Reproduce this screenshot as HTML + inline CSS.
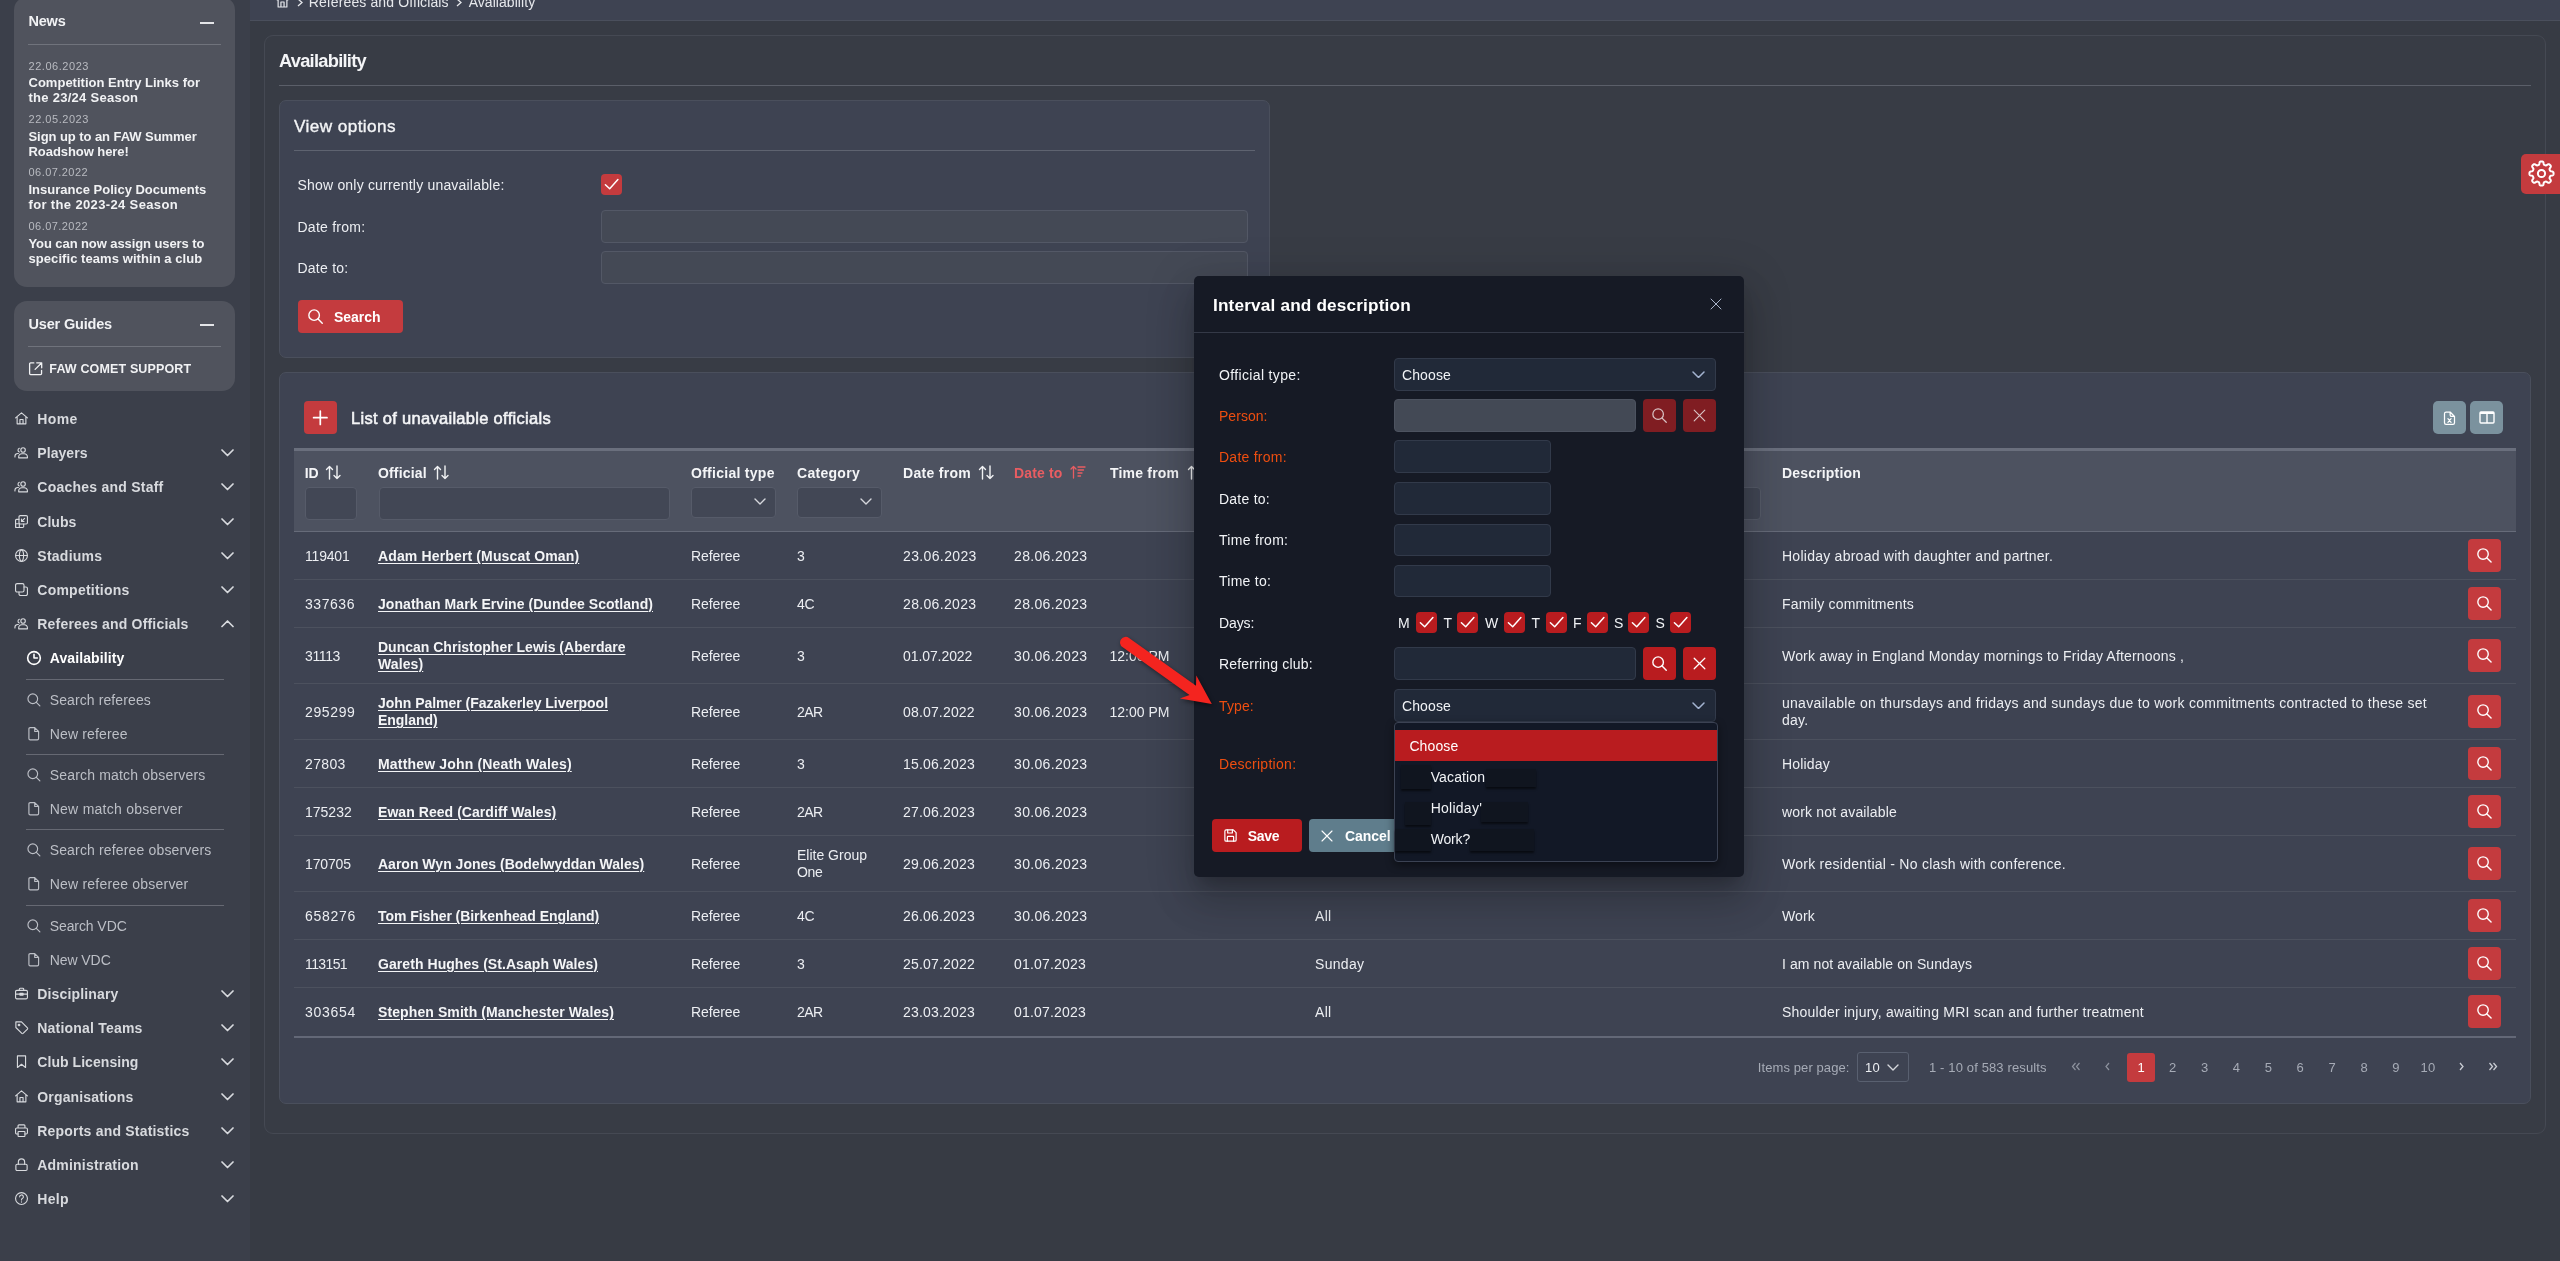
<!DOCTYPE html>
<html><head><meta charset="utf-8"><title>Availability</title>
<style>
html,body{margin:0;padding:0;}
body{width:2560px;height:1261px;overflow:hidden;position:relative;background:#373b44;font-family:"Liberation Sans",sans-serif;}
#w{position:absolute;left:0;top:0;width:2560px;height:1261px;overflow:hidden;will-change:transform;}
.a{position:absolute;box-sizing:border-box;}
.t{white-space:nowrap;}
.u{text-decoration:underline;text-underline-offset:2px;text-decoration-thickness:1px;}
</style></head><body>
<div id="w">
<div class="a" style="left:0px;top:0px;width:250px;height:1261px;background:#3b3f4a;"></div>
<div class="a" style="left:14px;top:-3px;width:221px;height:289.5px;background:#50535d;border-radius:13px;"></div>
<div class="a t " style="left:28.5px;top:13.73px;font-size:14.5px;line-height:14.5px;color:#f1f2f4;letter-spacing:-0.220px;font-weight:bold;">News</div>
<div class="a" style="left:200px;top:22px;width:14px;height:2px;background:#e4e5e8;"></div>
<div class="a" style="left:28px;top:44px;width:193px;height:1px;background:#70737c;"></div>
<div class="a t " style="left:28.5px;top:60.69px;font-size:11px;line-height:11px;color:#b9bbc1;letter-spacing:0.545px;">22.06.2023</div>
<div class="a t " style="left:28.5px;top:76.00px;font-size:13px;line-height:13px;color:#f1f2f4;letter-spacing:0.012px;font-weight:bold;">Competition Entry Links for</div>
<div class="a t " style="left:28.5px;top:91.00px;font-size:13px;line-height:13px;color:#f1f2f4;letter-spacing:0.269px;font-weight:bold;">the 23/24 Season</div>
<div class="a t " style="left:28.5px;top:113.69px;font-size:11px;line-height:11px;color:#b9bbc1;letter-spacing:0.525px;">22.05.2023</div>
<div class="a t " style="left:28.5px;top:130.00px;font-size:13px;line-height:13px;color:#f1f2f4;letter-spacing:-0.064px;font-weight:bold;">Sign up to an FAW Summer</div>
<div class="a t " style="left:28.5px;top:145.00px;font-size:13px;line-height:13px;color:#f1f2f4;letter-spacing:-0.059px;font-weight:bold;">Roadshow here!</div>
<div class="a t " style="left:28.5px;top:167.19px;font-size:11px;line-height:11px;color:#b9bbc1;letter-spacing:0.445px;">06.07.2022</div>
<div class="a t " style="left:28.5px;top:183.00px;font-size:13px;line-height:13px;color:#f1f2f4;letter-spacing:0.003px;font-weight:bold;">Insurance Policy Documents</div>
<div class="a t " style="left:28.5px;top:198.00px;font-size:13px;line-height:13px;color:#f1f2f4;letter-spacing:0.358px;font-weight:bold;">for the 2023-24 Season</div>
<div class="a t " style="left:28.5px;top:220.69px;font-size:11px;line-height:11px;color:#b9bbc1;letter-spacing:0.445px;">06.07.2022</div>
<div class="a t " style="left:28.5px;top:237.00px;font-size:13px;line-height:13px;color:#f1f2f4;letter-spacing:-0.088px;font-weight:bold;">You can now assign users to</div>
<div class="a t " style="left:28.5px;top:252.00px;font-size:13px;line-height:13px;color:#f1f2f4;letter-spacing:0.066px;font-weight:bold;">specific teams within a club</div>
<div class="a" style="left:14px;top:301px;width:221px;height:89.7px;background:#50535d;border-radius:13px;"></div>
<div class="a t " style="left:28.5px;top:316.73px;font-size:14.5px;line-height:14.5px;color:#f1f2f4;letter-spacing:-0.175px;font-weight:bold;">User Guides</div>
<div class="a" style="left:200px;top:324px;width:14px;height:2px;background:#e4e5e8;"></div>
<div class="a" style="left:28px;top:346px;width:193px;height:1px;background:#70737c;"></div>
<svg class="a" style="left:27.5px;top:360.5px;" width="15.5" height="15.5" viewBox="0 0 24 24"><path d="M9 3 H4 a1.5 1.5 0 0 0 -1.5 1.5 V19.5 a1.5 1.5 0 0 0 1.5 1.5 H19.5 a1.5 1.5 0 0 0 1.5 -1.5 V14.5 M13.5 2.8 H21.2 V10.5 M21 3 L11 13" stroke="#f1f2f4" stroke-width="2" fill="none" stroke-linecap="round" stroke-linejoin="round"/></svg>
<div class="a t " style="left:49.3px;top:363.02px;font-size:12.5px;line-height:12.5px;color:#f1f2f4;letter-spacing:0.142px;font-weight:bold;">FAW COMET SUPPORT</div>
<svg class="a" style="left:14px;top:411px;" width="15" height="15" viewBox="0 0 24 24"><g stroke="#d8dade" stroke-width="1.8" fill="none" stroke-linecap="round" stroke-linejoin="round"><path d="M2.5 11 L12 3 L21.5 11 M5 9.5 V20.5 H19 V9.5 M9.5 20.5 V13.5 H14.5 V20.5" /></g></svg>
<div class="a t " style="left:37.3px;top:412.15px;font-size:14px;line-height:14px;color:#d8dade;letter-spacing:0.351px;font-weight:bold;">Home</div>
<svg class="a" style="left:14px;top:445px;" width="15" height="15" viewBox="0 0 24 24"><g stroke="#d8dade" stroke-width="1.8" fill="none" stroke-linecap="round" stroke-linejoin="round"><circle cx="14.5" cy="8" r="3.6"/><path d="M7.5 20.5 v-1.5 a5 5 0 0 1 5 -5 h4 a5 5 0 0 1 5 5 v1.5 z M8.5 5.2 a3.2 3.2 0 0 0 0 6 M1.5 19 v-1 a4.5 4.5 0 0 1 4.5 -4.5 h1"/></g></svg>
<div class="a t " style="left:37.3px;top:446.15px;font-size:14px;line-height:14px;color:#d8dade;letter-spacing:0.068px;font-weight:bold;">Players</div>
<svg class="a" style="left:221.3px;top:449px;" width="13" height="7.5" viewBox="0 0 13 7.5"><path d="M1 1 L6.5 6.5 L12 1" stroke="#d8dade" stroke-width="1.7" fill="none" stroke-linecap="round" stroke-linejoin="round"/></svg>
<svg class="a" style="left:14px;top:479px;" width="15" height="15" viewBox="0 0 24 24"><g stroke="#d8dade" stroke-width="1.8" fill="none" stroke-linecap="round" stroke-linejoin="round"><circle cx="14.5" cy="8" r="3.6"/><path d="M7.5 20.5 v-1.5 a5 5 0 0 1 5 -5 h4 a5 5 0 0 1 5 5 v1.5 z M8.5 5.2 a3.2 3.2 0 0 0 0 6 M1.5 19 v-1 a4.5 4.5 0 0 1 4.5 -4.5 h1"/></g></svg>
<div class="a t " style="left:37.3px;top:480.15px;font-size:14px;line-height:14px;color:#d8dade;letter-spacing:0.239px;font-weight:bold;">Coaches and Staff</div>
<svg class="a" style="left:221.3px;top:483px;" width="13" height="7.5" viewBox="0 0 13 7.5"><path d="M1 1 L6.5 6.5 L12 1" stroke="#d8dade" stroke-width="1.7" fill="none" stroke-linecap="round" stroke-linejoin="round"/></svg>
<svg class="a" style="left:14px;top:514px;" width="15" height="15" viewBox="0 0 24 24"><g stroke="#d8dade" stroke-width="1.8" fill="none" stroke-linecap="round" stroke-linejoin="round"><rect x="8" y="2.5" width="13.5" height="13.5" rx="2"/><path d="M8 8.5 H4 a1.5 1.5 0 0 0 -1.5 1.5 V20 a1.5 1.5 0 0 0 1.5 1.5 H14 a1.5 1.5 0 0 0 1.5 -1.5 V16"/><path d="M17 7 L12 12 M12 8 V12 H16"/><rect x="2.5" y="15.5" width="6" height="6" rx="1"/></g></svg>
<div class="a t " style="left:37.3px;top:515.15px;font-size:14px;line-height:14px;color:#d8dade;letter-spacing:0.022px;font-weight:bold;">Clubs</div>
<svg class="a" style="left:221.3px;top:518px;" width="13" height="7.5" viewBox="0 0 13 7.5"><path d="M1 1 L6.5 6.5 L12 1" stroke="#d8dade" stroke-width="1.7" fill="none" stroke-linecap="round" stroke-linejoin="round"/></svg>
<svg class="a" style="left:14px;top:548px;" width="15" height="15" viewBox="0 0 24 24"><g stroke="#d8dade" stroke-width="1.8" fill="none" stroke-linecap="round" stroke-linejoin="round"><circle cx="12" cy="12" r="9.5"/><path d="M2.5 12 H21.5 M12 2.5 c-4.5 3 -4.5 16 0 19 M12 2.5 c4.5 3 4.5 16 0 19"/></g></svg>
<div class="a t " style="left:37.3px;top:549.15px;font-size:14px;line-height:14px;color:#d8dade;letter-spacing:0.248px;font-weight:bold;">Stadiums</div>
<svg class="a" style="left:221.3px;top:552px;" width="13" height="7.5" viewBox="0 0 13 7.5"><path d="M1 1 L6.5 6.5 L12 1" stroke="#d8dade" stroke-width="1.7" fill="none" stroke-linecap="round" stroke-linejoin="round"/></svg>
<svg class="a" style="left:14px;top:582px;" width="15" height="15" viewBox="0 0 24 24"><g stroke="#d8dade" stroke-width="1.8" fill="none" stroke-linecap="round" stroke-linejoin="round"><rect x="2.5" y="2.5" width="13.5" height="13.5" rx="2.5"/><path d="M16 8 H19 a2.5 2.5 0 0 1 2.5 2.5 V19 a2.5 2.5 0 0 1 -2.5 2.5 H10.5 a2.5 2.5 0 0 1 -2.5 -2.5 V16"/></g></svg>
<div class="a t " style="left:37.3px;top:583.15px;font-size:14px;line-height:14px;color:#d8dade;letter-spacing:0.230px;font-weight:bold;">Competitions</div>
<svg class="a" style="left:221.3px;top:586px;" width="13" height="7.5" viewBox="0 0 13 7.5"><path d="M1 1 L6.5 6.5 L12 1" stroke="#d8dade" stroke-width="1.7" fill="none" stroke-linecap="round" stroke-linejoin="round"/></svg>
<svg class="a" style="left:14px;top:616px;" width="15" height="15" viewBox="0 0 24 24"><g stroke="#d8dade" stroke-width="1.8" fill="none" stroke-linecap="round" stroke-linejoin="round"><circle cx="14.5" cy="8" r="3.6"/><path d="M7.5 20.5 v-1.5 a5 5 0 0 1 5 -5 h4 a5 5 0 0 1 5 5 v1.5 z M8.5 5.2 a3.2 3.2 0 0 0 0 6 M1.5 19 v-1 a4.5 4.5 0 0 1 4.5 -4.5 h1"/></g></svg>
<div class="a t " style="left:37.3px;top:617.15px;font-size:14px;line-height:14px;color:#d8dade;letter-spacing:0.188px;font-weight:bold;">Referees and Officials</div>
<svg class="a" style="left:221.3px;top:620px;" width="13" height="7.5" viewBox="0 0 13 7.5"><path d="M1 6.5 L6.5 1 L12 6.5" stroke="#d8dade" stroke-width="1.7" fill="none" stroke-linecap="round" stroke-linejoin="round"/></svg>
<svg class="a" style="left:14px;top:986px;" width="15" height="15" viewBox="0 0 24 24"><g stroke="#d8dade" stroke-width="1.8" fill="none" stroke-linecap="round" stroke-linejoin="round"><rect x="2.5" y="7" width="19" height="13.5" rx="2"/><path d="M8.5 7 V5 a1.5 1.5 0 0 1 1.5 -1.5 h4 a1.5 1.5 0 0 1 1.5 1.5 V7 M2.5 13 H21.5 M9.5 11.5 h5 v3 h-5 z"/></g></svg>
<div class="a t " style="left:37.3px;top:987.15px;font-size:14px;line-height:14px;color:#d8dade;letter-spacing:0.153px;font-weight:bold;">Disciplinary</div>
<svg class="a" style="left:221.3px;top:990px;" width="13" height="7.5" viewBox="0 0 13 7.5"><path d="M1 1 L6.5 6.5 L12 1" stroke="#d8dade" stroke-width="1.7" fill="none" stroke-linecap="round" stroke-linejoin="round"/></svg>
<svg class="a" style="left:14px;top:1020px;" width="15" height="15" viewBox="0 0 24 24"><g stroke="#d8dade" stroke-width="1.8" fill="none" stroke-linecap="round" stroke-linejoin="round"><path d="M3 3 H12 L21.5 12.5 a1.5 1.5 0 0 1 0 2 L14.5 21.5 a1.5 1.5 0 0 1 -2 0 L3 12 z"/><circle cx="8" cy="8" r="1.3"/></g></svg>
<div class="a t " style="left:37.3px;top:1021.15px;font-size:14px;line-height:14px;color:#d8dade;letter-spacing:0.205px;font-weight:bold;">National Teams</div>
<svg class="a" style="left:221.3px;top:1024px;" width="13" height="7.5" viewBox="0 0 13 7.5"><path d="M1 1 L6.5 6.5 L12 1" stroke="#d8dade" stroke-width="1.7" fill="none" stroke-linecap="round" stroke-linejoin="round"/></svg>
<svg class="a" style="left:14px;top:1054px;" width="15" height="15" viewBox="0 0 24 24"><g stroke="#d8dade" stroke-width="1.8" fill="none" stroke-linecap="round" stroke-linejoin="round"><path d="M5.5 3 H18.5 V21.5 L12 16.5 L5.5 21.5 z"/></g></svg>
<div class="a t " style="left:37.3px;top:1055.15px;font-size:14px;line-height:14px;color:#d8dade;letter-spacing:0.054px;font-weight:bold;">Club Licensing</div>
<svg class="a" style="left:221.3px;top:1058px;" width="13" height="7.5" viewBox="0 0 13 7.5"><path d="M1 1 L6.5 6.5 L12 1" stroke="#d8dade" stroke-width="1.7" fill="none" stroke-linecap="round" stroke-linejoin="round"/></svg>
<svg class="a" style="left:14px;top:1089px;" width="15" height="15" viewBox="0 0 24 24"><g stroke="#d8dade" stroke-width="1.8" fill="none" stroke-linecap="round" stroke-linejoin="round"><path d="M2.5 11 L12 3 L21.5 11 M5 9.5 V20.5 H19 V9.5 M9.5 20.5 V13.5 H14.5 V20.5" /></g></svg>
<div class="a t " style="left:37.3px;top:1090.15px;font-size:14px;line-height:14px;color:#d8dade;letter-spacing:0.151px;font-weight:bold;">Organisations</div>
<svg class="a" style="left:221.3px;top:1093px;" width="13" height="7.5" viewBox="0 0 13 7.5"><path d="M1 1 L6.5 6.5 L12 1" stroke="#d8dade" stroke-width="1.7" fill="none" stroke-linecap="round" stroke-linejoin="round"/></svg>
<svg class="a" style="left:14px;top:1123px;" width="15" height="15" viewBox="0 0 24 24"><g stroke="#d8dade" stroke-width="1.8" fill="none" stroke-linecap="round" stroke-linejoin="round"><path d="M6.5 8 V4.5 a1.5 1.5 0 0 1 1.5 -1.5 h8 a1.5 1.5 0 0 1 1.5 1.5 V8 M6.5 17.5 H4.5 a2 2 0 0 1 -2 -2 V10 a2 2 0 0 1 2 -2 H19.5 a2 2 0 0 1 2 2 V15.5 a2 2 0 0 1 -2 2 H17.5"/><rect x="6.5" y="13.5" width="11" height="8" rx="1"/></g></svg>
<div class="a t " style="left:37.3px;top:1124.15px;font-size:14px;line-height:14px;color:#d8dade;letter-spacing:0.199px;font-weight:bold;">Reports and Statistics</div>
<svg class="a" style="left:221.3px;top:1127px;" width="13" height="7.5" viewBox="0 0 13 7.5"><path d="M1 1 L6.5 6.5 L12 1" stroke="#d8dade" stroke-width="1.7" fill="none" stroke-linecap="round" stroke-linejoin="round"/></svg>
<svg class="a" style="left:14px;top:1157px;" width="15" height="15" viewBox="0 0 24 24"><g stroke="#d8dade" stroke-width="1.8" fill="none" stroke-linecap="round" stroke-linejoin="round"><rect x="3" y="11.5" width="18" height="10" rx="2"/><path d="M7 11.5 V8 a5 5 0 0 1 10 0 V11.5"/></g></svg>
<div class="a t " style="left:37.3px;top:1158.15px;font-size:14px;line-height:14px;color:#d8dade;letter-spacing:0.194px;font-weight:bold;">Administration</div>
<svg class="a" style="left:221.3px;top:1161px;" width="13" height="7.5" viewBox="0 0 13 7.5"><path d="M1 1 L6.5 6.5 L12 1" stroke="#d8dade" stroke-width="1.7" fill="none" stroke-linecap="round" stroke-linejoin="round"/></svg>
<svg class="a" style="left:14px;top:1191px;" width="15" height="15" viewBox="0 0 24 24"><g stroke="#d8dade" stroke-width="1.8" fill="none" stroke-linecap="round" stroke-linejoin="round"><circle cx="12" cy="12" r="9.5"/><path d="M9 9.3 a3 3 0 1 1 4.3 2.7 c-1 .5 -1.3 1.2 -1.3 2.2 M12 17.3 v.4"/></g></svg>
<div class="a t " style="left:37.3px;top:1192.15px;font-size:14px;line-height:14px;color:#d8dade;letter-spacing:0.340px;font-weight:bold;">Help</div>
<svg class="a" style="left:221.3px;top:1195px;" width="13" height="7.5" viewBox="0 0 13 7.5"><path d="M1 1 L6.5 6.5 L12 1" stroke="#d8dade" stroke-width="1.7" fill="none" stroke-linecap="round" stroke-linejoin="round"/></svg>
<svg class="a" style="left:26.2px;top:650px;" width="16" height="16" viewBox="0 0 24 24"><g stroke="#ffffff" stroke-width="2.4" fill="none" stroke-linecap="round" stroke-linejoin="round"><circle cx="12" cy="12" r="9.5"/><path d="M12 6.5 V12 H17"/></g></svg>
<div class="a t " style="left:49.7px;top:651.15px;font-size:14px;line-height:14px;color:#ffffff;letter-spacing:0.100px;font-weight:bold;">Availability</div>
<svg class="a" style="left:26.2px;top:692px;" width="15.5" height="15.5" viewBox="0 0 24 24"><g stroke="#bcbfc6" stroke-width="1.8" fill="none" stroke-linecap="round" stroke-linejoin="round"><circle cx="10.5" cy="10.5" r="7.5"/><path d="M16 16 L21.5 21.5"/></g></svg>
<div class="a t " style="left:49.7px;top:693.15px;font-size:14px;line-height:14px;color:#bcbfc6;letter-spacing:0.106px;">Search referees</div>
<svg class="a" style="left:26.2px;top:726px;" width="15.5" height="15.5" viewBox="0 0 24 24"><g stroke="#bcbfc6" stroke-width="1.8" fill="none" stroke-linecap="round" stroke-linejoin="round"><path d="M13.5 2.5 H6.5 a2 2 0 0 0 -2 2 V19.5 a2 2 0 0 0 2 2 H17.5 a2 2 0 0 0 2 -2 V8.5 z M13.5 2.5 V8.5 H19.5"/></g></svg>
<div class="a t " style="left:49.7px;top:727.15px;font-size:14px;line-height:14px;color:#bcbfc6;letter-spacing:0.159px;">New referee</div>
<svg class="a" style="left:26.2px;top:767px;" width="15.5" height="15.5" viewBox="0 0 24 24"><g stroke="#bcbfc6" stroke-width="1.8" fill="none" stroke-linecap="round" stroke-linejoin="round"><circle cx="10.5" cy="10.5" r="7.5"/><path d="M16 16 L21.5 21.5"/></g></svg>
<div class="a t " style="left:49.7px;top:768.15px;font-size:14px;line-height:14px;color:#bcbfc6;letter-spacing:0.185px;">Search match observers</div>
<svg class="a" style="left:26.2px;top:801px;" width="15.5" height="15.5" viewBox="0 0 24 24"><g stroke="#bcbfc6" stroke-width="1.8" fill="none" stroke-linecap="round" stroke-linejoin="round"><path d="M13.5 2.5 H6.5 a2 2 0 0 0 -2 2 V19.5 a2 2 0 0 0 2 2 H17.5 a2 2 0 0 0 2 -2 V8.5 z M13.5 2.5 V8.5 H19.5"/></g></svg>
<div class="a t " style="left:49.7px;top:802.15px;font-size:14px;line-height:14px;color:#bcbfc6;letter-spacing:0.262px;">New match observer</div>
<svg class="a" style="left:26.2px;top:842px;" width="15.5" height="15.5" viewBox="0 0 24 24"><g stroke="#bcbfc6" stroke-width="1.8" fill="none" stroke-linecap="round" stroke-linejoin="round"><circle cx="10.5" cy="10.5" r="7.5"/><path d="M16 16 L21.5 21.5"/></g></svg>
<div class="a t " style="left:49.7px;top:843.15px;font-size:14px;line-height:14px;color:#bcbfc6;letter-spacing:0.156px;">Search referee observers</div>
<svg class="a" style="left:26.2px;top:876px;" width="15.5" height="15.5" viewBox="0 0 24 24"><g stroke="#bcbfc6" stroke-width="1.8" fill="none" stroke-linecap="round" stroke-linejoin="round"><path d="M13.5 2.5 H6.5 a2 2 0 0 0 -2 2 V19.5 a2 2 0 0 0 2 2 H17.5 a2 2 0 0 0 2 -2 V8.5 z M13.5 2.5 V8.5 H19.5"/></g></svg>
<div class="a t " style="left:49.7px;top:877.15px;font-size:14px;line-height:14px;color:#bcbfc6;letter-spacing:0.209px;">New referee observer</div>
<svg class="a" style="left:26.2px;top:918px;" width="15.5" height="15.5" viewBox="0 0 24 24"><g stroke="#bcbfc6" stroke-width="1.8" fill="none" stroke-linecap="round" stroke-linejoin="round"><circle cx="10.5" cy="10.5" r="7.5"/><path d="M16 16 L21.5 21.5"/></g></svg>
<div class="a t " style="left:49.7px;top:919.15px;font-size:14px;line-height:14px;color:#bcbfc6;letter-spacing:-0.081px;">Search VDC</div>
<svg class="a" style="left:26.2px;top:952px;" width="15.5" height="15.5" viewBox="0 0 24 24"><g stroke="#bcbfc6" stroke-width="1.8" fill="none" stroke-linecap="round" stroke-linejoin="round"><path d="M13.5 2.5 H6.5 a2 2 0 0 0 -2 2 V19.5 a2 2 0 0 0 2 2 H17.5 a2 2 0 0 0 2 -2 V8.5 z M13.5 2.5 V8.5 H19.5"/></g></svg>
<div class="a t " style="left:49.7px;top:953.15px;font-size:14px;line-height:14px;color:#bcbfc6;letter-spacing:-0.065px;">New VDC</div>
<div class="a" style="left:26px;top:679px;width:198px;height:1px;background:#666973;"></div>
<div class="a" style="left:26px;top:754px;width:198px;height:1px;background:#666973;"></div>
<div class="a" style="left:26px;top:828.7px;width:198px;height:1px;background:#666973;"></div>
<div class="a" style="left:26px;top:904.6px;width:198px;height:1px;background:#666973;"></div>
<div class="a" style="left:250px;top:0px;width:2310px;height:20px;background:#3e4352;"></div>
<div class="a" style="left:250px;top:20px;width:2310px;height:1px;background:#4a4f5c;"></div>
<svg class="a" style="left:275px;top:-7.5px;" width="15" height="15.5" viewBox="0 0 24 24"><g stroke="#e6e8ec" stroke-width="1.9" fill="none" stroke-linejoin="round"><path d="M2.5 11 L12 3 L21.5 11 M5 9.5 V22 H19 V9.5 M9.5 22 V14 H14.5 V22"/></g></svg>
<div class="a t " style="left:308.7px;top:-5.35px;font-size:14px;line-height:14px;color:#e6e8ec;letter-spacing:0.115px;">Referees and Officials</div>
<div class="a t " style="left:468.7px;top:-5.35px;font-size:14px;line-height:14px;color:#e6e8ec;letter-spacing:0.051px;">Availability</div>
<svg class="a" style="left:296px;top:-2px;" width="8" height="9" viewBox="0 0 8 9"><path d="M2 1 L6 4.5 L2 8" stroke="#e6e8ec" stroke-width="1.3" fill="none"/></svg>
<svg class="a" style="left:455px;top:-2px;" width="8" height="9" viewBox="0 0 8 9"><path d="M2 1 L6 4.5 L2 8" stroke="#e6e8ec" stroke-width="1.3" fill="none"/></svg>
<div class="a" style="left:264px;top:35px;width:2282px;height:1098.5px;background:#383c45;border:1px solid #454953;border-radius:9px;"></div>
<div class="a t " style="left:279px;top:52.01px;font-size:18.3px;line-height:18.3px;color:#f4f5f7;letter-spacing:-0.745px;font-weight:bold;">Availability</div>
<div class="a" style="left:279px;top:85px;width:2252px;height:1px;background:#5b5f69;"></div>
<div class="a" style="left:279px;top:100px;width:991px;height:258px;background:#3e4352;border:1px solid #4a4f5c;border-radius:7px;"></div>
<div class="a t " style="left:294px;top:117.74px;font-size:17.2px;line-height:17.2px;color:#f4f5f7;letter-spacing:0.399px;-webkit-text-stroke:0.35px #f4f5f7;">View options</div>
<div class="a" style="left:294px;top:150px;width:961px;height:1px;background:#5e6370;"></div>
<div class="a t " style="left:297.5px;top:178.15px;font-size:14px;line-height:14px;color:#eceef2;letter-spacing:0.194px;">Show only currently unavailable:</div>
<div class="a t " style="left:297.5px;top:220.15px;font-size:14px;line-height:14px;color:#eceef2;letter-spacing:0.245px;">Date from:</div>
<div class="a t " style="left:297.5px;top:260.65px;font-size:14px;line-height:14px;color:#eceef2;letter-spacing:0.234px;">Date to:</div>
<div class="a" style="left:601px;top:174px;width:21px;height:21px;background:#c43b3e;border-radius:4px;"></div>
<svg class="a" style="left:601px;top:174px;" width="21" height="21" viewBox="0 0 21 21"><path d="M4.4 10.8 L8.7 14.8 L16.9 5.6" stroke="#fff" stroke-width="1.5" fill="none" stroke-linecap="round" stroke-linejoin="round"/></svg>
<div class="a" style="left:601px;top:210px;width:647px;height:32.5px;background:#444955;border:1px solid #535866;border-radius:4px;"></div>
<div class="a" style="left:601px;top:251px;width:647px;height:32.5px;background:#444955;border:1px solid #535866;border-radius:4px;"></div>
<div class="a" style="left:298px;top:300px;width:105px;height:33px;background:#c43b3e;border-radius:4px;"></div>
<svg class="a" style="left:306.3px;top:306.6px;" width="18.6" height="18.6" viewBox="0 0 24 24"><circle cx="10.5" cy="10.5" r="6.8" fill="none" stroke="#fff" stroke-width="1.8"/><path d="M15.6 15.6 L21 21" stroke="#fff" stroke-width="1.8" stroke-linecap="round"/></svg>
<div class="a t " style="left:334px;top:309.65px;font-size:14px;line-height:14px;color:#fff;letter-spacing:-0.033px;font-weight:bold;">Search</div>
<div class="a" style="left:279px;top:372px;width:2252px;height:732px;background:#3e4352;border:1px solid #4a4f5c;border-radius:7px;"></div>
<div class="a" style="left:304px;top:401px;width:33px;height:33px;background:#c43b3e;border-radius:4px;"></div>
<svg class="a" style="left:304px;top:401px;" width="33" height="33" viewBox="0 0 33 33"><path d="M16.3 10 V23.4 M9.6 16.7 H23" stroke="#fff" stroke-width="1.7" stroke-linecap="round"/></svg>
<div class="a t " style="left:351px;top:410.03px;font-size:16.5px;line-height:16.5px;color:#f4f5f7;letter-spacing:0.297px;-webkit-text-stroke:0.55px #f4f5f7;">List of unavailable officials</div>
<div class="a" style="left:2433px;top:401px;width:33px;height:33px;background:#7b929e;border-radius:5px;"></div>
<div class="a" style="left:2470px;top:401px;width:33px;height:33px;background:#7b929e;border-radius:5px;"></div>
<svg class="a" style="left:2441.8px;top:409.5px;" width="15" height="16" viewBox="0 0 24 24"><g stroke="#fff" stroke-width="2" fill="none" stroke-linejoin="round" stroke-linecap="round"><path d="M13 2.5 H6.5 a2.5 2.5 0 0 0 -2.5 2.5 V19.5 a2.5 2.5 0 0 0 2.5 2.5 H17.5 a2.5 2.5 0 0 0 2.5 -2.5 V9.5 z M13 2.5 V7 a2.5 2.5 0 0 0 2.5 2.5 H20"/><path d="M9.5 13 L14.5 19 M14.5 13 L9.5 19"/></g></svg>
<svg class="a" style="left:2478.5px;top:411px;" width="16" height="13" viewBox="0 0 16 13"><g stroke="#fff" stroke-width="1.4" fill="none"><rect x="1" y="1" width="14" height="11" rx="1"/><path d="M8 1 V12"/><path d="M1 2 H15" stroke-width="2"/></g></svg>
<div class="a" style="left:294px;top:448px;width:2222px;height:3px;background:#6a6f7d;"></div>
<div class="a" style="left:294px;top:451px;width:2222px;height:80px;background:#4d5260;"></div>
<div class="a" style="left:294px;top:531px;width:2222px;height:1px;background:#666b79;"></div>
<div class="a t " style="left:304.8px;top:466.45px;font-size:14px;line-height:14px;color:#f4f5f7;letter-spacing:-0.125px;font-weight:bold;">ID</div>
<svg class="a" style="left:325px;top:464.5px;" width="16" height="15" viewBox="0 0 16 15"><g stroke="#f1f2f4" stroke-width="1.4" fill="none" stroke-linecap="round" stroke-linejoin="round"><path d="M4.5 14 V1.5 M1.5 4.5 L4.5 1.5 L7.5 4.5"/><path d="M12 1 V13.5 M9 10.5 L12 13.5 L15 10.5"/></g></svg>
<div class="a t " style="left:377.9px;top:466.45px;font-size:14px;line-height:14px;color:#f4f5f7;letter-spacing:0.193px;font-weight:bold;">Official</div>
<svg class="a" style="left:433.2px;top:464.5px;" width="16" height="15" viewBox="0 0 16 15"><g stroke="#f1f2f4" stroke-width="1.4" fill="none" stroke-linecap="round" stroke-linejoin="round"><path d="M4.5 14 V1.5 M1.5 4.5 L4.5 1.5 L7.5 4.5"/><path d="M12 1 V13.5 M9 10.5 L12 13.5 L15 10.5"/></g></svg>
<div class="a t " style="left:691px;top:466.45px;font-size:14px;line-height:14px;color:#f4f5f7;letter-spacing:0.278px;font-weight:bold;">Official type</div>
<div class="a t " style="left:797px;top:466.45px;font-size:14px;line-height:14px;color:#f4f5f7;letter-spacing:0.290px;font-weight:bold;">Category</div>
<div class="a t " style="left:903px;top:466.45px;font-size:14px;line-height:14px;color:#f4f5f7;letter-spacing:0.295px;font-weight:bold;">Date from</div>
<svg class="a" style="left:978.3px;top:464.5px;" width="16" height="15" viewBox="0 0 16 15"><g stroke="#f1f2f4" stroke-width="1.4" fill="none" stroke-linecap="round" stroke-linejoin="round"><path d="M4.5 14 V1.5 M1.5 4.5 L4.5 1.5 L7.5 4.5"/><path d="M12 1 V13.5 M9 10.5 L12 13.5 L15 10.5"/></g></svg>
<div class="a t " style="left:1014px;top:466.45px;font-size:14px;line-height:14px;color:#e85d62;letter-spacing:0.150px;font-weight:bold;">Date to</div>
<svg class="a" style="left:1070px;top:465px;" width="16" height="14" viewBox="0 0 16 14"><g stroke="#e85d62" stroke-width="1.3" fill="none" stroke-linecap="round" stroke-linejoin="round"><path d="M3.5 13 V1.5 M1 4 L3.5 1.5 L6 4"/><path d="M8 2 H15 M8 5 H13.5 M8 8 H12 M8 11 H10.5"/></g></svg>
<div class="a t " style="left:1110px;top:466.45px;font-size:14px;line-height:14px;color:#f4f5f7;letter-spacing:0.203px;font-weight:bold;">Time from</div>
<svg class="a" style="left:1186.5px;top:464.5px;" width="16" height="15" viewBox="0 0 16 15"><g stroke="#f1f2f4" stroke-width="1.4" fill="none" stroke-linecap="round" stroke-linejoin="round"><path d="M4.5 14 V1.5 M1.5 4.5 L4.5 1.5 L7.5 4.5"/><path d="M12 1 V13.5 M9 10.5 L12 13.5 L15 10.5"/></g></svg>
<div class="a t " style="left:1782px;top:466.45px;font-size:14px;line-height:14px;color:#f4f5f7;letter-spacing:0.171px;font-weight:bold;">Description</div>
<div class="a" style="left:305px;top:487px;width:51.5px;height:33px;background:#424755;border:1px solid #565b69;border-radius:4px;"></div>
<div class="a" style="left:378.5px;top:487px;width:291.3px;height:33px;background:#424755;border:1px solid #565b69;border-radius:4px;"></div>
<div class="a" style="left:691px;top:487px;width:84.5px;height:30.5px;background:#424755;border:1px solid #565b69;border-radius:4px;"></div>
<svg class="a" style="left:754px;top:497.5px;" width="12" height="7" viewBox="0 0 12 7"><path d="M1 1 L6.0 6 L11 1" stroke="#d5d7dc" stroke-width="1.4" fill="none" stroke-linecap="round" stroke-linejoin="round"/></svg>
<div class="a" style="left:797px;top:487px;width:85px;height:30.5px;background:#424755;border:1px solid #565b69;border-radius:4px;"></div>
<svg class="a" style="left:860px;top:497.5px;" width="12" height="7" viewBox="0 0 12 7"><path d="M1 1 L6.0 6 L11 1" stroke="#d5d7dc" stroke-width="1.4" fill="none" stroke-linecap="round" stroke-linejoin="round"/></svg>
<div class="a" style="left:1560px;top:487px;width:201px;height:33px;background:#424755;border:1px solid #565b69;border-radius:4px;"></div>
<div class="a" style="left:294px;top:579px;width:2222px;height:1px;background:#4c515e;"></div>
<div class="a t " style="left:305px;top:549.15px;font-size:14px;line-height:14px;color:#eceef2;letter-spacing:-0.196px;">119401</div>
<div class="a t u" style="left:378px;top:549.15px;font-size:14px;line-height:14px;color:#f4f5f7;letter-spacing:0.141px;font-weight:bold;">Adam Herbert (Muscat Oman)</div>
<div class="a t " style="left:691px;top:549.15px;font-size:14px;line-height:14px;color:#eceef2;letter-spacing:-0.080px;">Referee</div>
<div class="a t " style="left:797px;top:549.15px;font-size:14px;line-height:14px;color:#eceef2;letter-spacing:0.200px;">3</div>
<div class="a t " style="left:903px;top:549.15px;font-size:14px;line-height:14px;color:#eceef2;letter-spacing:0.368px;">23.06.2023</div>
<div class="a t " style="left:1014px;top:549.15px;font-size:14px;line-height:14px;color:#eceef2;letter-spacing:0.343px;">28.06.2023</div>
<div class="a t " style="left:1782px;top:549.15px;font-size:14px;line-height:14px;color:#eceef2;letter-spacing:0.253px;">Holiday abroad with daughter and partner.</div>
<div class="a" style="left:2467.7px;top:539px;width:33px;height:33px;background:#c43b3e;border-radius:4px;"></div>
<svg class="a" style="left:2474.8px;top:545.8px;" width="18.4" height="18.4" viewBox="0 0 24 24"><circle cx="10.5" cy="10.5" r="6.8" fill="none" stroke="#fff" stroke-width="1.8"/><path d="M15.6 15.6 L21 21" stroke="#fff" stroke-width="1.8" stroke-linecap="round"/></svg>
<div class="a" style="left:294px;top:627px;width:2222px;height:1px;background:#4c515e;"></div>
<div class="a t " style="left:305px;top:596.65px;font-size:14px;line-height:14px;color:#eceef2;letter-spacing:0.547px;">337636</div>
<div class="a t u" style="left:378px;top:596.65px;font-size:14px;line-height:14px;color:#f4f5f7;letter-spacing:0.051px;font-weight:bold;">Jonathan Mark Ervine (Dundee Scotland)</div>
<div class="a t " style="left:691px;top:596.65px;font-size:14px;line-height:14px;color:#eceef2;letter-spacing:-0.080px;">Referee</div>
<div class="a t " style="left:797px;top:596.65px;font-size:14px;line-height:14px;color:#eceef2;letter-spacing:-0.198px;">4C</div>
<div class="a t " style="left:903px;top:596.65px;font-size:14px;line-height:14px;color:#eceef2;letter-spacing:0.343px;">28.06.2023</div>
<div class="a t " style="left:1014px;top:596.65px;font-size:14px;line-height:14px;color:#eceef2;letter-spacing:0.343px;">28.06.2023</div>
<div class="a t " style="left:1782px;top:596.65px;font-size:14px;line-height:14px;color:#eceef2;letter-spacing:0.203px;">Family commitments</div>
<div class="a" style="left:2467.7px;top:587px;width:33px;height:33px;background:#c43b3e;border-radius:4px;"></div>
<svg class="a" style="left:2474.8px;top:593.8px;" width="18.4" height="18.4" viewBox="0 0 24 24"><circle cx="10.5" cy="10.5" r="6.8" fill="none" stroke="#fff" stroke-width="1.8"/><path d="M15.6 15.6 L21 21" stroke="#fff" stroke-width="1.8" stroke-linecap="round"/></svg>
<div class="a" style="left:294px;top:683px;width:2222px;height:1px;background:#4c515e;"></div>
<div class="a t " style="left:305px;top:648.65px;font-size:14px;line-height:14px;color:#eceef2;letter-spacing:-0.371px;">31113</div>
<div class="a t u" style="left:378px;top:640.15px;font-size:14px;line-height:14px;color:#f4f5f7;letter-spacing:0.004px;font-weight:bold;">Duncan Christopher Lewis (Aberdare</div>
<div class="a t u" style="left:378px;top:657.15px;font-size:14px;line-height:14px;color:#f4f5f7;letter-spacing:0.108px;font-weight:bold;">Wales)</div>
<div class="a t " style="left:691px;top:648.65px;font-size:14px;line-height:14px;color:#eceef2;letter-spacing:-0.080px;">Referee</div>
<div class="a t " style="left:797px;top:648.65px;font-size:14px;line-height:14px;color:#eceef2;letter-spacing:0.200px;">3</div>
<div class="a t " style="left:903px;top:648.65px;font-size:14px;line-height:14px;color:#eceef2;letter-spacing:-0.082px;">01.07.2022</div>
<div class="a t " style="left:1014px;top:648.65px;font-size:14px;line-height:14px;color:#eceef2;letter-spacing:0.343px;">30.06.2023</div>
<div class="a t " style="left:1109.5px;top:648.65px;font-size:14px;line-height:14px;color:#eceef2;letter-spacing:0.009px;">12:00 PM</div>
<div class="a t " style="left:1782px;top:648.65px;font-size:14px;line-height:14px;color:#eceef2;letter-spacing:0.185px;">Work away in England Monday mornings to Friday Afternoons ,</div>
<div class="a" style="left:2467.7px;top:639px;width:33px;height:33px;background:#c43b3e;border-radius:4px;"></div>
<svg class="a" style="left:2474.8px;top:645.8px;" width="18.4" height="18.4" viewBox="0 0 24 24"><circle cx="10.5" cy="10.5" r="6.8" fill="none" stroke="#fff" stroke-width="1.8"/><path d="M15.6 15.6 L21 21" stroke="#fff" stroke-width="1.8" stroke-linecap="round"/></svg>
<div class="a" style="left:294px;top:739px;width:2222px;height:1px;background:#4c515e;"></div>
<div class="a t " style="left:305px;top:704.65px;font-size:14px;line-height:14px;color:#eceef2;letter-spacing:0.630px;">295299</div>
<div class="a t u" style="left:378px;top:696.15px;font-size:14px;line-height:14px;color:#f4f5f7;letter-spacing:-0.033px;font-weight:bold;">John Palmer (Fazakerley Liverpool</div>
<div class="a t u" style="left:378px;top:713.15px;font-size:14px;line-height:14px;color:#f4f5f7;letter-spacing:-0.048px;font-weight:bold;">England)</div>
<div class="a t " style="left:691px;top:704.65px;font-size:14px;line-height:14px;color:#eceef2;letter-spacing:-0.080px;">Referee</div>
<div class="a t " style="left:797px;top:704.65px;font-size:14px;line-height:14px;color:#eceef2;letter-spacing:-0.578px;">2AR</div>
<div class="a t " style="left:903px;top:704.65px;font-size:14px;line-height:14px;color:#eceef2;letter-spacing:0.168px;">08.07.2022</div>
<div class="a t " style="left:1014px;top:704.65px;font-size:14px;line-height:14px;color:#eceef2;letter-spacing:0.343px;">30.06.2023</div>
<div class="a t " style="left:1109.5px;top:704.65px;font-size:14px;line-height:14px;color:#eceef2;letter-spacing:0.009px;">12:00 PM</div>
<div class="a t " style="left:1782px;top:696.15px;font-size:14px;line-height:14px;color:#eceef2;letter-spacing:0.266px;">unavailable on thursdays and fridays and sundays due to work commitments contracted to these set</div>
<div class="a t " style="left:1782px;top:713.15px;font-size:14px;line-height:14px;color:#eceef2;letter-spacing:0.200px;">day.</div>
<div class="a" style="left:2467.7px;top:695px;width:33px;height:33px;background:#c43b3e;border-radius:4px;"></div>
<svg class="a" style="left:2474.8px;top:701.8px;" width="18.4" height="18.4" viewBox="0 0 24 24"><circle cx="10.5" cy="10.5" r="6.8" fill="none" stroke="#fff" stroke-width="1.8"/><path d="M15.6 15.6 L21 21" stroke="#fff" stroke-width="1.8" stroke-linecap="round"/></svg>
<div class="a" style="left:294px;top:787px;width:2222px;height:1px;background:#4c515e;"></div>
<div class="a t " style="left:305px;top:756.65px;font-size:14px;line-height:14px;color:#eceef2;letter-spacing:0.364px;">27803</div>
<div class="a t u" style="left:378px;top:756.65px;font-size:14px;line-height:14px;color:#f4f5f7;letter-spacing:0.172px;font-weight:bold;">Matthew John (Neath Wales)</div>
<div class="a t " style="left:691px;top:756.65px;font-size:14px;line-height:14px;color:#eceef2;letter-spacing:-0.080px;">Referee</div>
<div class="a t " style="left:797px;top:756.65px;font-size:14px;line-height:14px;color:#eceef2;letter-spacing:0.200px;">3</div>
<div class="a t " style="left:903px;top:756.65px;font-size:14px;line-height:14px;color:#eceef2;letter-spacing:0.200px;">15.06.2023</div>
<div class="a t " style="left:1014px;top:756.65px;font-size:14px;line-height:14px;color:#eceef2;letter-spacing:0.343px;">30.06.2023</div>
<div class="a t " style="left:1782px;top:756.65px;font-size:14px;line-height:14px;color:#eceef2;letter-spacing:0.187px;">Holiday</div>
<div class="a" style="left:2467.7px;top:747px;width:33px;height:33px;background:#c43b3e;border-radius:4px;"></div>
<svg class="a" style="left:2474.8px;top:753.8px;" width="18.4" height="18.4" viewBox="0 0 24 24"><circle cx="10.5" cy="10.5" r="6.8" fill="none" stroke="#fff" stroke-width="1.8"/><path d="M15.6 15.6 L21 21" stroke="#fff" stroke-width="1.8" stroke-linecap="round"/></svg>
<div class="a" style="left:294px;top:835px;width:2222px;height:1px;background:#4c515e;"></div>
<div class="a t " style="left:305px;top:804.65px;font-size:14px;line-height:14px;color:#eceef2;letter-spacing:0.005px;">175232</div>
<div class="a t u" style="left:378px;top:804.65px;font-size:14px;line-height:14px;color:#f4f5f7;letter-spacing:0.056px;font-weight:bold;">Ewan Reed (Cardiff Wales)</div>
<div class="a t " style="left:691px;top:804.65px;font-size:14px;line-height:14px;color:#eceef2;letter-spacing:-0.080px;">Referee</div>
<div class="a t " style="left:797px;top:804.65px;font-size:14px;line-height:14px;color:#eceef2;letter-spacing:-0.578px;">2AR</div>
<div class="a t " style="left:903px;top:804.65px;font-size:14px;line-height:14px;color:#eceef2;letter-spacing:0.200px;">27.06.2023</div>
<div class="a t " style="left:1014px;top:804.65px;font-size:14px;line-height:14px;color:#eceef2;letter-spacing:0.343px;">30.06.2023</div>
<div class="a t " style="left:1782px;top:804.65px;font-size:14px;line-height:14px;color:#eceef2;letter-spacing:0.163px;">work not available</div>
<div class="a" style="left:2467.7px;top:795px;width:33px;height:33px;background:#c43b3e;border-radius:4px;"></div>
<svg class="a" style="left:2474.8px;top:801.8px;" width="18.4" height="18.4" viewBox="0 0 24 24"><circle cx="10.5" cy="10.5" r="6.8" fill="none" stroke="#fff" stroke-width="1.8"/><path d="M15.6 15.6 L21 21" stroke="#fff" stroke-width="1.8" stroke-linecap="round"/></svg>
<div class="a" style="left:294px;top:891px;width:2222px;height:1px;background:#4c515e;"></div>
<div class="a t " style="left:305px;top:856.65px;font-size:14px;line-height:14px;color:#eceef2;letter-spacing:-0.161px;">170705</div>
<div class="a t u" style="left:378px;top:856.65px;font-size:14px;line-height:14px;color:#f4f5f7;letter-spacing:0.006px;font-weight:bold;">Aaron Wyn Jones (Bodelwyddan Wales)</div>
<div class="a t " style="left:691px;top:856.65px;font-size:14px;line-height:14px;color:#eceef2;letter-spacing:-0.080px;">Referee</div>
<div class="a t " style="left:797px;top:848.15px;font-size:14px;line-height:14px;color:#eceef2;letter-spacing:-0.003px;">Elite Group</div>
<div class="a t " style="left:797px;top:865.15px;font-size:14px;line-height:14px;color:#eceef2;letter-spacing:-0.321px;">One</div>
<div class="a t " style="left:903px;top:856.65px;font-size:14px;line-height:14px;color:#eceef2;letter-spacing:0.200px;">29.06.2023</div>
<div class="a t " style="left:1014px;top:856.65px;font-size:14px;line-height:14px;color:#eceef2;letter-spacing:0.343px;">30.06.2023</div>
<div class="a t " style="left:1782px;top:856.65px;font-size:14px;line-height:14px;color:#eceef2;letter-spacing:0.253px;">Work residential - No clash with conference.</div>
<div class="a" style="left:2467.7px;top:847px;width:33px;height:33px;background:#c43b3e;border-radius:4px;"></div>
<svg class="a" style="left:2474.8px;top:853.8px;" width="18.4" height="18.4" viewBox="0 0 24 24"><circle cx="10.5" cy="10.5" r="6.8" fill="none" stroke="#fff" stroke-width="1.8"/><path d="M15.6 15.6 L21 21" stroke="#fff" stroke-width="1.8" stroke-linecap="round"/></svg>
<div class="a" style="left:294px;top:939px;width:2222px;height:1px;background:#4c515e;"></div>
<div class="a t " style="left:305px;top:908.65px;font-size:14px;line-height:14px;color:#eceef2;letter-spacing:0.714px;">658276</div>
<div class="a t u" style="left:378px;top:908.65px;font-size:14px;line-height:14px;color:#f4f5f7;letter-spacing:-0.064px;font-weight:bold;">Tom Fisher (Birkenhead England)</div>
<div class="a t " style="left:691px;top:908.65px;font-size:14px;line-height:14px;color:#eceef2;letter-spacing:-0.080px;">Referee</div>
<div class="a t " style="left:797px;top:908.65px;font-size:14px;line-height:14px;color:#eceef2;letter-spacing:-0.198px;">4C</div>
<div class="a t " style="left:903px;top:908.65px;font-size:14px;line-height:14px;color:#eceef2;letter-spacing:0.200px;">26.06.2023</div>
<div class="a t " style="left:1014px;top:908.65px;font-size:14px;line-height:14px;color:#eceef2;letter-spacing:0.343px;">30.06.2023</div>
<div class="a t " style="left:1315px;top:908.65px;font-size:14px;line-height:14px;color:#eceef2;letter-spacing:0.300px;">All</div>
<div class="a t " style="left:1782px;top:908.65px;font-size:14px;line-height:14px;color:#eceef2;letter-spacing:0.148px;">Work</div>
<div class="a" style="left:2467.7px;top:899px;width:33px;height:33px;background:#c43b3e;border-radius:4px;"></div>
<svg class="a" style="left:2474.8px;top:905.8px;" width="18.4" height="18.4" viewBox="0 0 24 24"><circle cx="10.5" cy="10.5" r="6.8" fill="none" stroke="#fff" stroke-width="1.8"/><path d="M15.6 15.6 L21 21" stroke="#fff" stroke-width="1.8" stroke-linecap="round"/></svg>
<div class="a" style="left:294px;top:987px;width:2222px;height:1px;background:#4c515e;"></div>
<div class="a t " style="left:305px;top:956.65px;font-size:14px;line-height:14px;color:#eceef2;letter-spacing:-0.613px;">113151</div>
<div class="a t u" style="left:378px;top:956.65px;font-size:14px;line-height:14px;color:#f4f5f7;letter-spacing:0.064px;font-weight:bold;">Gareth Hughes (St.Asaph Wales)</div>
<div class="a t " style="left:691px;top:956.65px;font-size:14px;line-height:14px;color:#eceef2;letter-spacing:-0.080px;">Referee</div>
<div class="a t " style="left:797px;top:956.65px;font-size:14px;line-height:14px;color:#eceef2;letter-spacing:0.200px;">3</div>
<div class="a t " style="left:903px;top:956.65px;font-size:14px;line-height:14px;color:#eceef2;letter-spacing:0.200px;">25.07.2022</div>
<div class="a t " style="left:1014px;top:956.65px;font-size:14px;line-height:14px;color:#eceef2;letter-spacing:0.200px;">01.07.2023</div>
<div class="a t " style="left:1315px;top:956.65px;font-size:14px;line-height:14px;color:#eceef2;letter-spacing:0.300px;">Sunday</div>
<div class="a t " style="left:1782px;top:956.65px;font-size:14px;line-height:14px;color:#eceef2;letter-spacing:0.084px;">I am not available on Sundays</div>
<div class="a" style="left:2467.7px;top:947px;width:33px;height:33px;background:#c43b3e;border-radius:4px;"></div>
<svg class="a" style="left:2474.8px;top:953.8px;" width="18.4" height="18.4" viewBox="0 0 24 24"><circle cx="10.5" cy="10.5" r="6.8" fill="none" stroke="#fff" stroke-width="1.8"/><path d="M15.6 15.6 L21 21" stroke="#fff" stroke-width="1.8" stroke-linecap="round"/></svg>
<div class="a t " style="left:305px;top:1005.15px;font-size:14px;line-height:14px;color:#eceef2;letter-spacing:0.714px;">303654</div>
<div class="a t u" style="left:378px;top:1005.15px;font-size:14px;line-height:14px;color:#f4f5f7;letter-spacing:0.098px;font-weight:bold;">Stephen Smith (Manchester Wales)</div>
<div class="a t " style="left:691px;top:1005.15px;font-size:14px;line-height:14px;color:#eceef2;letter-spacing:-0.080px;">Referee</div>
<div class="a t " style="left:797px;top:1005.15px;font-size:14px;line-height:14px;color:#eceef2;letter-spacing:-0.578px;">2AR</div>
<div class="a t " style="left:903px;top:1005.15px;font-size:14px;line-height:14px;color:#eceef2;letter-spacing:0.200px;">23.03.2023</div>
<div class="a t " style="left:1014px;top:1005.15px;font-size:14px;line-height:14px;color:#eceef2;letter-spacing:0.200px;">01.07.2023</div>
<div class="a t " style="left:1315px;top:1005.15px;font-size:14px;line-height:14px;color:#eceef2;letter-spacing:0.300px;">All</div>
<div class="a t " style="left:1782px;top:1005.15px;font-size:14px;line-height:14px;color:#eceef2;letter-spacing:0.226px;">Shoulder injury, awaiting MRI scan and further treatment</div>
<div class="a" style="left:2467.7px;top:995px;width:33px;height:33px;background:#c43b3e;border-radius:4px;"></div>
<svg class="a" style="left:2474.8px;top:1001.8px;" width="18.4" height="18.4" viewBox="0 0 24 24"><circle cx="10.5" cy="10.5" r="6.8" fill="none" stroke="#fff" stroke-width="1.8"/><path d="M15.6 15.6 L21 21" stroke="#fff" stroke-width="1.8" stroke-linecap="round"/></svg>
<div class="a" style="left:294px;top:1035.5px;width:2222px;height:2px;background:#636877;"></div>
<div class="a t " style="left:1757.8px;top:1061.00px;font-size:13px;line-height:13px;color:#a6abb6;letter-spacing:0.092px;">Items per page:</div>
<div class="a" style="left:1857px;top:1052.3px;width:51.5px;height:30px;background:#3e4352;border:1px solid #596070;border-radius:3px;"></div>
<div class="a t " style="left:1865px;top:1061.00px;font-size:13px;line-height:13px;color:#eceef2;letter-spacing:0.200px;">10</div>
<svg class="a" style="left:1887px;top:1063.5px;" width="12" height="7" viewBox="0 0 12 7"><path d="M1 1 L6.0 6 L11 1" stroke="#d5d7dc" stroke-width="1.4" fill="none" stroke-linecap="round" stroke-linejoin="round"/></svg>
<div class="a t " style="left:1929px;top:1061.00px;font-size:13px;line-height:13px;color:#a6abb6;letter-spacing:0.133px;">1 - 10 of 583 results</div>
<svg class="a" style="left:2071px;top:1062px;" width="10" height="9" viewBox="0 0 10 9"><path d="M4.5 1 L1.5 4.5 L4.5 8 M8.5 1 L5.5 4.5 L8.5 8" stroke="#8d929e" stroke-width="1.2" fill="none"/></svg>
<svg class="a" style="left:2104px;top:1062px;" width="8" height="9" viewBox="0 0 8 9"><path d="M5 1 L2 4.5 L5 8" stroke="#8d929e" stroke-width="1.2" fill="none"/></svg>
<div class="a" style="left:2127px;top:1053px;width:28px;height:28.5px;background:#c43b3e;border-radius:3px;"></div>
<div class="a t " style="left:2137.5px;top:1061.00px;font-size:13px;line-height:13px;color:#fff;letter-spacing:0.200px;">1</div>
<div class="a t " style="left:2168.984984375px;top:1061.00px;font-size:13px;line-height:13px;color:#a6abb6;letter-spacing:0.200px;">2</div>
<div class="a t " style="left:2200.884984375px;top:1061.00px;font-size:13px;line-height:13px;color:#a6abb6;letter-spacing:0.200px;">3</div>
<div class="a t " style="left:2232.784984375px;top:1061.00px;font-size:13px;line-height:13px;color:#a6abb6;letter-spacing:0.200px;">4</div>
<div class="a t " style="left:2264.6849843749997px;top:1061.00px;font-size:13px;line-height:13px;color:#a6abb6;letter-spacing:0.200px;">5</div>
<div class="a t " style="left:2296.5849843749997px;top:1061.00px;font-size:13px;line-height:13px;color:#a6abb6;letter-spacing:0.200px;">6</div>
<div class="a t " style="left:2328.484984375px;top:1061.00px;font-size:13px;line-height:13px;color:#a6abb6;letter-spacing:0.200px;">7</div>
<div class="a t " style="left:2360.384984375px;top:1061.00px;font-size:13px;line-height:13px;color:#a6abb6;letter-spacing:0.200px;">8</div>
<div class="a t " style="left:2392.284984375px;top:1061.00px;font-size:13px;line-height:13px;color:#a6abb6;letter-spacing:0.200px;">9</div>
<div class="a t " style="left:2420.4699687499997px;top:1061.00px;font-size:13px;line-height:13px;color:#a6abb6;letter-spacing:0.200px;">10</div>
<svg class="a" style="left:2457px;top:1062px;" width="8" height="9" viewBox="0 0 8 9"><path d="M3 1 L6 4.5 L3 8" stroke="#c9ccd3" stroke-width="1.3" fill="none"/></svg>
<svg class="a" style="left:2488px;top:1062px;" width="10" height="9" viewBox="0 0 10 9"><path d="M1.5 1 L4.5 4.5 L1.5 8 M5.5 1 L8.5 4.5 L5.5 8" stroke="#c9ccd3" stroke-width="1.3" fill="none"/></svg>
<div class="a" style="left:2521px;top:154px;width:45px;height:40px;background:#c43b3e;border-radius:5px;"></div>
<svg class="a" style="left:2527.9px;top:159.9px;" width="27" height="27" viewBox="0 0 27 27"><path d="M13.50 1.44 L13.82 1.45 L14.13 1.47 L14.44 1.52 L14.75 1.62 L15.04 1.81 L15.29 2.17 L15.49 2.78 L15.62 3.52 L15.75 4.13 L15.91 4.51 L16.10 4.72 L16.31 4.86 L16.52 4.96 L16.74 5.06 L16.96 5.15 L17.18 5.24 L17.40 5.33 L17.62 5.40 L17.87 5.45 L18.15 5.44 L18.53 5.29 L19.06 4.95 L19.67 4.52 L20.24 4.22 L20.68 4.15 L21.02 4.22 L21.30 4.36 L21.56 4.55 L21.80 4.75 L22.03 4.97 L22.25 5.20 L22.45 5.44 L22.64 5.70 L22.78 5.98 L22.85 6.32 L22.78 6.76 L22.48 7.33 L22.05 7.94 L21.71 8.47 L21.56 8.85 L21.55 9.13 L21.60 9.38 L21.67 9.60 L21.76 9.82 L21.85 10.04 L21.94 10.26 L22.04 10.48 L22.14 10.69 L22.28 10.90 L22.49 11.09 L22.87 11.25 L23.48 11.38 L24.22 11.51 L24.83 11.71 L25.19 11.96 L25.38 12.25 L25.48 12.56 L25.53 12.87 L25.55 13.18 L25.56 13.50 L25.55 13.82 L25.53 14.13 L25.48 14.44 L25.38 14.75 L25.19 15.04 L24.83 15.29 L24.22 15.49 L23.48 15.62 L22.87 15.75 L22.49 15.91 L22.28 16.10 L22.14 16.31 L22.04 16.52 L21.94 16.74 L21.85 16.96 L21.76 17.18 L21.67 17.40 L21.60 17.62 L21.55 17.87 L21.56 18.15 L21.71 18.53 L22.05 19.06 L22.48 19.67 L22.78 20.24 L22.85 20.68 L22.78 21.02 L22.64 21.30 L22.45 21.56 L22.25 21.80 L22.03 22.03 L21.80 22.25 L21.56 22.45 L21.30 22.64 L21.02 22.78 L20.68 22.85 L20.24 22.78 L19.67 22.48 L19.06 22.05 L18.53 21.71 L18.15 21.56 L17.87 21.55 L17.62 21.60 L17.40 21.67 L17.18 21.76 L16.96 21.85 L16.74 21.94 L16.52 22.04 L16.31 22.14 L16.10 22.28 L15.91 22.49 L15.75 22.87 L15.62 23.48 L15.49 24.22 L15.29 24.83 L15.04 25.19 L14.75 25.38 L14.44 25.48 L14.13 25.53 L13.82 25.55 L13.50 25.56 L13.18 25.55 L12.87 25.53 L12.56 25.48 L12.25 25.38 L11.96 25.19 L11.71 24.83 L11.51 24.22 L11.38 23.48 L11.25 22.87 L11.09 22.49 L10.90 22.28 L10.69 22.14 L10.48 22.04 L10.26 21.94 L10.04 21.85 L9.82 21.76 L9.60 21.67 L9.38 21.60 L9.13 21.55 L8.85 21.56 L8.47 21.71 L7.94 22.05 L7.33 22.48 L6.76 22.78 L6.32 22.85 L5.98 22.78 L5.70 22.64 L5.44 22.45 L5.20 22.25 L4.97 22.03 L4.75 21.80 L4.55 21.56 L4.36 21.30 L4.22 21.02 L4.15 20.68 L4.22 20.24 L4.52 19.67 L4.95 19.06 L5.29 18.53 L5.44 18.15 L5.45 17.87 L5.40 17.62 L5.33 17.40 L5.24 17.18 L5.15 16.96 L5.06 16.74 L4.96 16.52 L4.86 16.31 L4.72 16.10 L4.51 15.91 L4.13 15.75 L3.52 15.62 L2.78 15.49 L2.17 15.29 L1.81 15.04 L1.62 14.75 L1.52 14.44 L1.47 14.13 L1.45 13.82 L1.44 13.50 L1.45 13.18 L1.47 12.87 L1.52 12.56 L1.62 12.25 L1.81 11.96 L2.17 11.71 L2.78 11.51 L3.52 11.38 L4.13 11.25 L4.51 11.09 L4.72 10.90 L4.86 10.69 L4.96 10.48 L5.06 10.26 L5.15 10.04 L5.24 9.82 L5.33 9.60 L5.40 9.38 L5.45 9.13 L5.44 8.85 L5.29 8.47 L4.95 7.94 L4.52 7.33 L4.22 6.76 L4.15 6.32 L4.22 5.98 L4.36 5.70 L4.55 5.44 L4.75 5.20 L4.97 4.97 L5.20 4.75 L5.44 4.55 L5.70 4.36 L5.98 4.22 L6.32 4.15 L6.76 4.22 L7.33 4.52 L7.94 4.95 L8.47 5.29 L8.85 5.44 L9.13 5.45 L9.38 5.40 L9.60 5.33 L9.82 5.24 L10.04 5.15 L10.26 5.06 L10.48 4.96 L10.69 4.86 L10.90 4.72 L11.09 4.51 L11.25 4.13 L11.38 3.52 L11.51 2.78 L11.71 2.17 L11.96 1.81 L12.25 1.62 L12.56 1.52 L12.87 1.47 L13.18 1.45 Z" stroke="#fff" stroke-width="2" fill="none" stroke-linejoin="round"/><circle cx="13.5" cy="13.5" r="3.6" stroke="#fff" stroke-width="2" fill="none"/></svg>
<div class="a" style="left:1194px;top:276px;width:550px;height:601px;background:#161a25;border-radius:5px;box-shadow:0 11px 15px -7px rgba(0,0,0,.2),0 24px 38px 3px rgba(0,0,0,.14),0 9px 46px 8px rgba(0,0,0,.12);"></div>
<div class="a t " style="left:1213px;top:297.24px;font-size:17.2px;line-height:17.2px;color:#ffffff;letter-spacing:0.166px;font-weight:bold;">Interval and description</div>
<svg class="a" style="left:1708px;top:296px;" width="16" height="16" viewBox="0 0 24 24"><path d="M4.5 4.5 L19.5 19.5 M19.5 4.5 L4.5 19.5" stroke="#aab5cc" stroke-width="1.5" stroke-linecap="round" fill="none"/></svg>
<div class="a" style="left:1194px;top:332px;width:550px;height:1px;background:#343947;"></div>
<div class="a t " style="left:1219px;top:367.95px;font-size:14px;line-height:14px;color:#f1f3f6;letter-spacing:0.352px;">Official type:</div>
<div class="a" style="left:1394px;top:358px;width:322px;height:33px;background:#212938;border:1px solid #323a4a;border-radius:4px;"></div>
<div class="a t " style="left:1402px;top:367.95px;font-size:14px;line-height:14px;color:#f1f3f6;letter-spacing:0.107px;">Choose</div>
<svg class="a" style="left:1692px;top:370.5px;" width="13" height="7.5" viewBox="0 0 13 7.5"><path d="M1 1 L6.5 6.5 L12 1" stroke="#a3b3d0" stroke-width="1.5" fill="none" stroke-linecap="round" stroke-linejoin="round"/></svg>
<div class="a t " style="left:1219px;top:408.95px;font-size:14px;line-height:14px;color:#ee4e10;letter-spacing:0.036px;">Person:</div>
<div class="a" style="left:1394px;top:399px;width:242px;height:33px;background:#434955;border:1px solid #4d5360;border-radius:4px;"></div>
<div class="a" style="left:1643px;top:399px;width:33px;height:33px;background:#801d22;border-radius:4px;"></div>
<svg class="a" style="left:1650.2px;top:405.8px;" width="18.6" height="18.6" viewBox="0 0 24 24"><circle cx="10.5" cy="10.5" r="6.8" fill="none" stroke="#d9c3c5" stroke-width="1.6"/><path d="M15.6 15.6 L21 21" stroke="#d9c3c5" stroke-width="1.6" stroke-linecap="round"/></svg>
<div class="a" style="left:1683px;top:399px;width:33px;height:33px;background:#801d22;border-radius:4px;"></div>
<svg class="a" style="left:1691px;top:407px;" width="17" height="17" viewBox="0 0 24 24"><path d="M4.5 4.5 L19.5 19.5 M19.5 4.5 L4.5 19.5" stroke="#d9c3c5" stroke-width="1.6" stroke-linecap="round" fill="none"/></svg>
<div class="a t " style="left:1219px;top:450.15px;font-size:14px;line-height:14px;color:#ee4e10;letter-spacing:0.245px;">Date from:</div>
<div class="a" style="left:1394px;top:440px;width:157px;height:32.7px;background:#212938;border:1px solid #323a4a;border-radius:4px;"></div>
<div class="a t " style="left:1219px;top:492.15px;font-size:14px;line-height:14px;color:#f1f3f6;letter-spacing:0.234px;">Date to:</div>
<div class="a" style="left:1394px;top:482px;width:157px;height:32.7px;background:#212938;border:1px solid #323a4a;border-radius:4px;"></div>
<div class="a t " style="left:1219px;top:533.15px;font-size:14px;line-height:14px;color:#f1f3f6;letter-spacing:0.293px;">Time from:</div>
<div class="a" style="left:1394px;top:524px;width:157px;height:32px;background:#212938;border:1px solid #323a4a;border-radius:4px;"></div>
<div class="a t " style="left:1219px;top:574.15px;font-size:14px;line-height:14px;color:#f1f3f6;letter-spacing:0.257px;">Time to:</div>
<div class="a" style="left:1394px;top:565px;width:157px;height:32px;background:#212938;border:1px solid #323a4a;border-radius:4px;"></div>
<div class="a t " style="left:1219px;top:616.15px;font-size:14px;line-height:14px;color:#f1f3f6;letter-spacing:-0.097px;">Days:</div>
<div class="a t " style="left:1398px;top:616.15px;font-size:14px;line-height:14px;color:#f1f3f6;letter-spacing:0.000px;">M</div>
<div class="a" style="left:1416px;top:612px;width:21px;height:21px;background:#b91c1f;border-radius:4px;"></div>
<svg class="a" style="left:1416px;top:612px;" width="21" height="21" viewBox="0 0 21 21"><path d="M4.4 10.8 L8.7 14.8 L16.9 5.6" stroke="#fff" stroke-width="1.5" fill="none" stroke-linecap="round" stroke-linejoin="round"/></svg>
<div class="a t " style="left:1443.5px;top:616.15px;font-size:14px;line-height:14px;color:#f1f3f6;letter-spacing:0.000px;">T</div>
<div class="a" style="left:1457px;top:612px;width:21px;height:21px;background:#b91c1f;border-radius:4px;"></div>
<svg class="a" style="left:1457px;top:612px;" width="21" height="21" viewBox="0 0 21 21"><path d="M4.4 10.8 L8.7 14.8 L16.9 5.6" stroke="#fff" stroke-width="1.5" fill="none" stroke-linecap="round" stroke-linejoin="round"/></svg>
<div class="a t " style="left:1485px;top:616.15px;font-size:14px;line-height:14px;color:#f1f3f6;letter-spacing:0.000px;">W</div>
<div class="a" style="left:1504px;top:612px;width:21px;height:21px;background:#b91c1f;border-radius:4px;"></div>
<svg class="a" style="left:1504px;top:612px;" width="21" height="21" viewBox="0 0 21 21"><path d="M4.4 10.8 L8.7 14.8 L16.9 5.6" stroke="#fff" stroke-width="1.5" fill="none" stroke-linecap="round" stroke-linejoin="round"/></svg>
<div class="a t " style="left:1531.6px;top:616.15px;font-size:14px;line-height:14px;color:#f1f3f6;letter-spacing:0.000px;">T</div>
<div class="a" style="left:1546px;top:612px;width:21px;height:21px;background:#b91c1f;border-radius:4px;"></div>
<svg class="a" style="left:1546px;top:612px;" width="21" height="21" viewBox="0 0 21 21"><path d="M4.4 10.8 L8.7 14.8 L16.9 5.6" stroke="#fff" stroke-width="1.5" fill="none" stroke-linecap="round" stroke-linejoin="round"/></svg>
<div class="a t " style="left:1573px;top:616.15px;font-size:14px;line-height:14px;color:#f1f3f6;letter-spacing:0.000px;">F</div>
<div class="a" style="left:1587px;top:612px;width:21px;height:21px;background:#b91c1f;border-radius:4px;"></div>
<svg class="a" style="left:1587px;top:612px;" width="21" height="21" viewBox="0 0 21 21"><path d="M4.4 10.8 L8.7 14.8 L16.9 5.6" stroke="#fff" stroke-width="1.5" fill="none" stroke-linecap="round" stroke-linejoin="round"/></svg>
<div class="a t " style="left:1614px;top:616.15px;font-size:14px;line-height:14px;color:#f1f3f6;letter-spacing:0.000px;">S</div>
<div class="a" style="left:1628px;top:612px;width:21px;height:21px;background:#b91c1f;border-radius:4px;"></div>
<svg class="a" style="left:1628px;top:612px;" width="21" height="21" viewBox="0 0 21 21"><path d="M4.4 10.8 L8.7 14.8 L16.9 5.6" stroke="#fff" stroke-width="1.5" fill="none" stroke-linecap="round" stroke-linejoin="round"/></svg>
<div class="a t " style="left:1655.5px;top:616.15px;font-size:14px;line-height:14px;color:#f1f3f6;letter-spacing:0.000px;">S</div>
<div class="a" style="left:1670px;top:612px;width:21px;height:21px;background:#b91c1f;border-radius:4px;"></div>
<svg class="a" style="left:1670px;top:612px;" width="21" height="21" viewBox="0 0 21 21"><path d="M4.4 10.8 L8.7 14.8 L16.9 5.6" stroke="#fff" stroke-width="1.5" fill="none" stroke-linecap="round" stroke-linejoin="round"/></svg>
<div class="a t " style="left:1219px;top:657.15px;font-size:14px;line-height:14px;color:#f1f3f6;letter-spacing:0.184px;">Referring club:</div>
<div class="a" style="left:1394px;top:647px;width:242px;height:33px;background:#212938;border:1px solid #323a4a;border-radius:4px;"></div>
<div class="a" style="left:1643px;top:647px;width:33px;height:33px;background:#b91c1f;border-radius:4px;"></div>
<svg class="a" style="left:1650.2px;top:653.8px;" width="18.6" height="18.6" viewBox="0 0 24 24"><circle cx="10.5" cy="10.5" r="6.8" fill="none" stroke="#fff" stroke-width="1.8"/><path d="M15.6 15.6 L21 21" stroke="#fff" stroke-width="1.8" stroke-linecap="round"/></svg>
<div class="a" style="left:1683px;top:647px;width:33px;height:33px;background:#b91c1f;border-radius:4px;"></div>
<svg class="a" style="left:1691px;top:655px;" width="17" height="17" viewBox="0 0 24 24"><path d="M4.5 4.5 L19.5 19.5 M19.5 4.5 L4.5 19.5" stroke="#fff" stroke-width="1.8" stroke-linecap="round" fill="none"/></svg>
<div class="a t " style="left:1219px;top:698.75px;font-size:14px;line-height:14px;color:#ee4e10;letter-spacing:0.112px;">Type:</div>
<div class="a" style="left:1394px;top:689px;width:322px;height:32.5px;background:#212938;border:1px solid #323a4a;border-radius:4px;"></div>
<div class="a t " style="left:1402px;top:698.75px;font-size:14px;line-height:14px;color:#f1f3f6;letter-spacing:0.107px;">Choose</div>
<svg class="a" style="left:1692px;top:701.5px;" width="13" height="7.5" viewBox="0 0 13 7.5"><path d="M1 1 L6.5 6.5 L12 1" stroke="#a3b3d0" stroke-width="1.5" fill="none" stroke-linecap="round" stroke-linejoin="round"/></svg>
<div class="a t " style="left:1219px;top:756.85px;font-size:14px;line-height:14px;color:#ee4e10;letter-spacing:0.282px;">Description:</div>
<div class="a" style="left:1212px;top:819px;width:90px;height:33px;background:#b91c1f;border-radius:4px;"></div>
<svg class="a" style="left:1222.5px;top:828px;" width="15" height="15" viewBox="0 0 24 24"><g stroke="#fff" stroke-width="1.9" fill="none" stroke-linejoin="round" stroke-linecap="round"><path d="M5 3 H16.5 L21 7.5 V19 a2 2 0 0 1 -2 2 H5 a2 2 0 0 1 -2 -2 V5 a2 2 0 0 1 2 -2 z"/><path d="M7.5 3 V8 H15 V3 M7 21 V14.5 a1 1 0 0 1 1 -1 H16 a1 1 0 0 1 1 1 V21"/></g></svg>
<div class="a t " style="left:1247.7px;top:829.15px;font-size:14px;line-height:14px;color:#fff;letter-spacing:-0.274px;font-weight:bold;">Save</div>
<div class="a" style="left:1309px;top:819px;width:110px;height:33px;background:#5f7d8c;border-radius:4px;"></div>
<svg class="a" style="left:1318.5px;top:827.5px;" width="16" height="16" viewBox="0 0 24 24"><path d="M4.5 4.5 L19.5 19.5 M19.5 4.5 L4.5 19.5" stroke="#fff" stroke-width="1.7" stroke-linecap="round" fill="none"/></svg>
<div class="a t " style="left:1345px;top:829.15px;font-size:14px;line-height:14px;color:#fff;letter-spacing:-0.035px;font-weight:bold;">Cancel</div>
<div class="a" style="left:1394px;top:722px;width:324px;height:140px;background:#121826;border:1px solid #3b4253;border-radius:4px;box-shadow:0 3px 8px rgba(0,0,0,0.45);"></div>
<div class="a" style="left:1395px;top:730px;width:322px;height:31px;background:#b91c1f;"></div>
<div class="a t " style="left:1409.4px;top:739.15px;font-size:14px;line-height:14px;color:#ffffff;letter-spacing:0.107px;">Choose</div>
<div class="a" style="left:1400.6px;top:765px;width:30.100000000000136px;height:24px;background:#10151f;box-shadow:0 2px 2px rgba(0,0,0,0.55);"></div>
<div class="a" style="left:1485.5px;top:769px;width:50.5px;height:17.5px;background:#10151f;box-shadow:0 2px 2px rgba(0,0,0,0.55);"></div>
<div class="a t " style="left:1430.7px;top:769.95px;font-size:14px;line-height:14px;color:#f1f3f6;letter-spacing:0.120px;">Vacation</div>
<div class="a" style="left:1405.4px;top:802px;width:25.299999999999955px;height:22.5px;background:#10151f;box-shadow:0 2px 2px rgba(0,0,0,0.55);"></div>
<div class="a" style="left:1481px;top:802px;width:47.299999999999955px;height:19.5px;background:#10151f;box-shadow:0 2px 2px rgba(0,0,0,0.55);"></div>
<div class="a t " style="left:1430.7px;top:801.25px;font-size:14px;line-height:14px;color:#f1f3f6;letter-spacing:0.250px;">Holiday'</div>
<div class="a" style="left:1395px;top:828.5px;width:35.700000000000045px;height:22.299999999999955px;background:#10151f;box-shadow:0 2px 2px rgba(0,0,0,0.55);"></div>
<div class="a" style="left:1470px;top:829px;width:63.799999999999955px;height:21.799999999999955px;background:#10151f;box-shadow:0 2px 2px rgba(0,0,0,0.55);"></div>
<div class="a t " style="left:1430.7px;top:832.15px;font-size:14px;line-height:14px;color:#f1f3f6;letter-spacing:-0.179px;">Work?</div>
<svg class="a" style="left:0;top:0;overflow:visible;filter:drop-shadow(1px 2px 2px rgba(0,0,0,0.45));" width="2560" height="1261"><path d="M1122.4 647.1 L1189.5 695.0 L1179.9 698.6 L1211.8 704.0 L1196.3 675.6 L1196.0 685.8 L1129.0 637.9 A5.6 5.6 0 0 0 1122.4 647.1 Z" fill="#f4241f"/></svg>
</div>
</body></html>
